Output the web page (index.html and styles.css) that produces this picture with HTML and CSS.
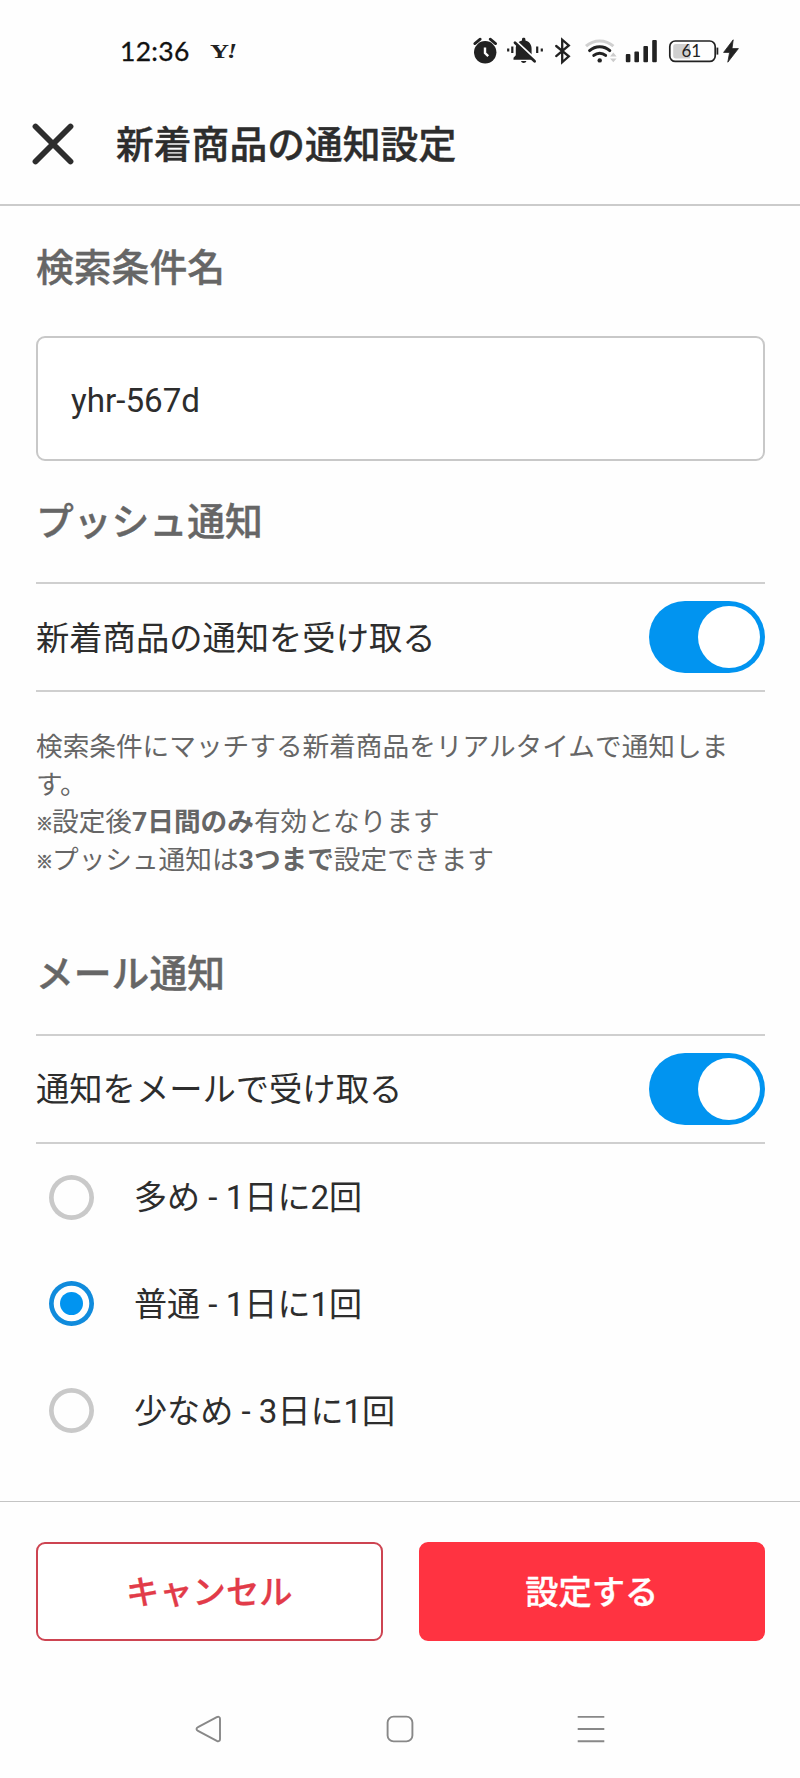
FILE: index.html
```html
<!DOCTYPE html>
<html lang="ja">
<head>
    <meta charset="UTF-8">
    <meta name="viewport" content="width=device-width, initial-scale=1.0">
    <title>新着商品の通知設定</title>
    <link rel="stylesheet" href="styles.css">
</head>
<body>
    <div class="status-bar">
        <span class="clock">12:36</span>
        <svg class="yahoo" width="30" height="20" viewBox="0 0 30 20"><text x="0" y="17" textLength="19" lengthAdjust="spacingAndGlyphs">Y</text><text class="mark" x="17" y="17" textLength="10" lengthAdjust="spacingAndGlyphs">!</text></svg>
        <div class="status-icons">
            <!-- アラーム / バイブ / Bluetooth / Wi-Fi / 電波 / 電池 -->
            <svg width="270" height="30" viewBox="472 36 270 30">
                <circle cx="485.2" cy="52.3" r="11.2"/>
                <path class="line" d="M474.8 43.6l5.4-4.4M495.6 43.6l-5.4-4.4"/>
                <path d="M485 47.5v5.5l3.2 3.2" fill="none" stroke="#fff" stroke-width="2.4"/>
                <path d="M513.5 59.8v-2l2.3-2.6v-6.4c0-4.4 2.6-7.4 6.2-8.2v-1.4c0-1.8 3.4-1.8 3.4 0v1.4c3.6.8 6.2 3.8 6.2 8.2v6.4l2.3 2.6v2zM521 61h5.4c-.5 2.6-4.9 2.6-5.4 0z"/>
                <path d="M514.5 39.8l22 20.6" stroke="#fff" stroke-width="2.4" fill="none"/>
                <path class="line" d="M515 42.8l19.6 18.4"/>
                <path d="M512.3 46.5v6.5M508.2 48.5v3M537.2 46.5v6.5M541.8 48.5v3" fill="none" stroke="#222" stroke-width="2.2"/>
                <path class="line bluetooth" d="M556.2 46l12.6 10.4-6.6 5.9V39.7l6.6 5.8-12.6 10.6"/>
                <path d="M586 46.2a20.5 20.5 0 0 1 27.4 0" fill="none" stroke="#d0d0d0" stroke-width="3"/>
                <path d="M589.6 50.6a15 15 0 0 1 20.2 0M593.8 55.4a9 9 0 0 1 11.8 0" fill="none" stroke="#222" stroke-width="3" stroke-linecap="round"/>
                <circle cx="599.7" cy="60.4" r="2.2"/>
                <path d="M610 56.4l3.3-3.8 3.3 3.8zM610 58.4l3.3 3.8 3.3-3.8z" fill="#ccc"/>
                <rect x="625.8" y="54" width="4.6" height="8.2" rx="1"/>
                <rect x="634.4" y="51.5" width="4.6" height="10.7" rx="1"/>
                <rect x="643.4" y="46" width="4.6" height="16.2" rx="1"/>
                <rect x="652.2" y="40" width="4.6" height="22.2" rx="1"/>
                <path d="M676 44h14v14.5h-14c-2 0-2.8-1-2.8-2.8v-9c0-1.8.8-2.7 2.8-2.7z" fill="#d0d0d0"/>
                <rect x="669.8" y="41" width="45.4" height="20.4" rx="5.5" fill="none" stroke="#222" stroke-width="1.7"/>
                <path d="M717.4 47.6v7" stroke="#222" stroke-width="1.8"/>
                <text class="level" x="691.3" y="57.2" text-anchor="middle">61</text>
                <path d="M733.2 39.8l-9.6 12.6h6l-1.8 9.8 10.6-13.6h-6.4z" stroke="#222" stroke-width=".8" stroke-linejoin="round"/>
            </svg>
        </div>
    </div>

    <header class="header">
        <svg class="close" width="42" height="42" viewBox="0 0 42 42"><path d="M3.5 3.5l35 35M38.5 3.5l-35 35"/></svg>
        <h1>新着商品の通知設定</h1>
    </header>

    <main class="content">
        <h2>検索条件名</h2>
        <input class="name-input" type="text" value="yhr-567d">

        <h2 class="push-title">プッシュ通知</h2>
        <div class="switch-row">
            <span class="label">新着商品の通知を受け取る</span>
            <div class="toggle"><div class="knob"></div></div>
        </div>
        <div class="notes">
            <p>検索条件にマッチする新着商品をリアルタイムで通知します。</p>
            <p><span class="kome">※</span>設定後<b>7日間のみ</b>有効となります</p>
            <p><span class="kome">※</span>プッシュ通知は<b>3つまで</b>設定できます</p>
        </div>

        <h2 class="mail-title">メール通知</h2>
        <div class="switch-row">
            <span class="label">通知をメールで受け取る</span>
            <div class="toggle"><div class="knob"></div></div>
        </div>
        <div class="options">
            <label class="option"><span class="radio"></span><span class="label">多め - 1日に2回</span></label>
            <label class="option"><span class="radio checked"></span><span class="label">普通 - 1日に1回</span></label>
            <label class="option"><span class="radio"></span><span class="label">少なめ - 3日に1回</span></label>
        </div>
    </main>

    <footer class="footer">
        <button class="btn cancel">キャンセル</button>
        <button class="btn submit">設定する</button>
    </footer>

    <nav class="nav-bar">
        <svg width="28" height="28" viewBox="0 0 28 28"><path d="M3 12.2L21.8 2.2c1.8-.9 3.2-.2 3.2 1.6v20.4c0 1.8-1.4 2.5-3.2 1.6L3 15.8c-2-1-2-2.6 0-3.6z"/></svg>
        <svg width="28" height="28" viewBox="0 0 28 28"><rect x="1.6" y="1.6" width="24.8" height="24.8" rx="6"/></svg>
        <svg width="28" height="28" viewBox="0 0 28 28"><path d="M.7 1.9h26.6M.7 14h26.6M.7 26.2h26.6"/></svg>
    </nav>
</body>
</html>
```
FILE: styles.css
```css
*{
    box-sizing: border-box;
    margin: 0;
    padding: 0;
}
body{
    width: 800px;
    height: 1778px;
    background: #fefefe;
    color: #2d2d2d;
    font-family: Roboto, "Noto Sans CJK JP", sans-serif;
    overflow: hidden;
}
.status-bar{
    display: flex;
    align-items: center;
    height: 102px;
    padding: 0 58px 0 120px;
}
.clock{
    width: 90px;
    font-family: Lato, sans-serif;
    font-size: 26.5px;
    letter-spacing: 0.3px;
    color: #111;
    -webkit-text-stroke: 0.3px #111;
}
.yahoo text{
    font: bold 19px "Liberation Serif", serif;
    fill: #222;
}
.yahoo .mark{
    font-style: italic;
    font-size: 20px;
}
.status-icons{
    display: flex;
    margin-left: auto;
    fill: #222;
}
.status-icons .line{
    fill: none;
    stroke: #222;
    stroke-width: 2.8;
    stroke-linecap: round;
}
.status-icons .bluetooth{
    stroke-width: 2.3;
}
.level{
    font: 17px Lato, sans-serif;
}
.header{
    display: flex;
    align-items: center;
    gap: 42px;
    height: 104px;
    padding: 0 32px 19px;
    border-bottom: 2px solid #cbcbcb;
}
.close{
    fill: none;
    stroke: #2d2d2d;
    stroke-width: 5.8;
    stroke-linecap: round;
}
h1, h2{
    font-size: 37.8px;
    font-weight: 500;
    line-height: 56px;
    -webkit-text-stroke: 0.4px currentColor;
}
h1{
    padding-top: 2px;
}
h2{
    color: #666;
}
.content{
    height: 1295px;
    padding: 34px 35px 0 36px;
}
.name-input{
    display: block;
    width: 100%;
    height: 125px;
    margin-top: 40px;
    padding: 4px 33px 0;
    border: 2px solid #c8c8c8;
    border-radius: 9px;
    background: #fff;
    font: 33.2px Roboto, sans-serif;
    color: #2d2d2d;
}
.push-title{
    margin: 33px 0 32px;
}
.switch-row{
    display: flex;
    align-items: center;
    justify-content: space-between;
    height: 110px;
    border-top: 2px solid #cfcfcf;
    border-bottom: 2px solid #cfcfcf;
}
.label{
    padding-bottom: 4px;
    font-size: 33.3px;
}
.toggle{
    display: flex;
    justify-content: flex-end;
    align-items: center;
    width: 116px;
    height: 72px;
    padding-right: 5px;
    border-radius: 36px;
    background: #0194f0;
}
.knob{
    width: 62px;
    height: 62px;
    border-radius: 50%;
    background: #fff;
}
.notes{
    margin-top: 37px;
    font-size: 26.67px;
    line-height: 37.7px;
    color: #666;
}
.kome{
    display: inline-block;
    width: 16px;
    font-size: 17px;
    font-weight: bold;
    line-height: 1;
    vertical-align: 1px;
    -webkit-text-stroke: 0.6px currentColor;
}
.mail-title{
    margin: 66px 0 32px;
}
.options{
    padding-left: 13px;
}
.option{
    display: flex;
    align-items: center;
    gap: 40px;
    height: 106.7px;
}
.option .label{
    font-size: 33.1px;
}
.radio{
    display: flex;
    align-items: center;
    justify-content: center;
    width: 45px;
    height: 45px;
    border-radius: 50%;
    box-shadow: inset 0 0 0 4.7px #c9c9c9;
}
.checked{
    box-shadow: inset 0 0 0 4.7px #108bdc;
}
.checked::after{
    content: "";
    width: 23px;
    height: 23px;
    border-radius: 50%;
    background: #0194f0;
}
.footer{
    display: flex;
    gap: 36px;
    padding: 40px 35px 0 36px;
    border-top: 1px solid #c4c4c4;
}
.btn{
    flex: 1;
    height: 99px;
    padding-bottom: 4px;
    border: 2px solid #ff3341;
    border-radius: 9px;
    font: 500 33.3px Roboto, "Noto Sans CJK JP", sans-serif;
    -webkit-text-stroke: 0.3px currentColor;
}
.cancel{
    background: #fff;
    border-color: #cd4451;
    color: #e23b49;
}
.submit{
    background: #ff3341;
    color: #fff;
}
.nav-bar{
    display: flex;
    justify-content: space-between;
    padding: 74px 195px 0 195px;
}
.nav-bar svg{
    fill: none;
    stroke: #888;
    stroke-width: 1.9;
}
```
